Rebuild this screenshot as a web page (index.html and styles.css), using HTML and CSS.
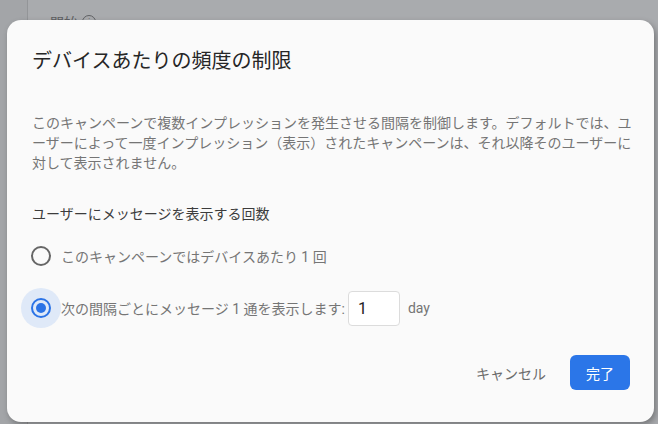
FILE: index.html
```html
<!DOCTYPE html>
<html lang="ja">
<head>
    <meta charset="UTF-8">
    <meta name="viewport" content="width=device-width, initial-scale=1.0">
    <title>デバイスあたりの頻度の制限</title>
    <link rel="stylesheet" href="styles.css">
</head>
<body>
    <div class="page">
        <div class="sidebar"></div>
        <div class="main">
            <div class="field-label">開始 <span class="info">i</span></div>
        </div>
    </div>

    <div class="dialog">
        <h1 class="dialog-title">デバイスあたりの頻度の制限</h1>
        <p class="description">このキャンペーンで複数インプレッションを発生させる間隔を制御します。デフォルトでは、ユーザーによって一度インプレッション（表示）されたキャンペーンは、それ以降そのユーザーに対して表示されません。</p>

        <div class="section-label">ユーザーにメッセージを表示する回数</div>

        <label class="radio-row">
            <span class="radio"><span class="ring"></span></span>
            <span class="radio-text">このキャンペーンではデバイスあたり 1 回</span>
        </label>

        <label class="radio-row">
            <span class="radio checked"><span class="ring"></span></span>
            <span class="radio-text">次の間隔ごとにメッセージ 1 通を表示します:</span>
            <input class="interval" type="text" value="1">
            <span class="unit">day</span>
        </label>

        <div class="actions">
            <button class="btn-cancel">キャンセル</button>
            <button class="btn-done">完了</button>
        </div>
    </div>
</body>
</html>
```

FILE: styles.css
```css
body {
    margin: 0;
    font-family: Roboto, "Noto Sans CJK JP", sans-serif;
    background-color: #a9abae;
    overflow: hidden;
}
.page {
    display: flex;
    height: 424px;
}
.sidebar {
    width: 27px;
    background-color: #a3a5a8;
    border-right: 1px solid #939598;
}
.main {
    flex: 1;
    padding: 12px 0 0 22px;
}
.field-label {
    font-size: 14px;
    color: #5f6063;
    display: flex;
    align-items: center;
    gap: 4px;
}
.info {
    width: 12px;
    height: 12px;
    border: 1.5px solid #5f6063;
    border-radius: 50%;
    font-size: 9px;
    line-height: 12px;
    text-align: center;
}

/* dialog */
.dialog {
    position: absolute;
    left: 7px;
    top: 20px;
    width: 647px;
    height: 402px;
    box-sizing: border-box;
    padding: 27px 24px 0 25px;
    background-color: #fafafa;
    border-radius: 14px;
    box-shadow: 2px 3px 6px rgba(0,0,0,0.3);
}
.dialog-title {
    margin: 0;
    font-size: 20px;
    font-weight: 400;
    line-height: 28px;
    color: #262626;
}
.description {
    margin: 38px -6px 0 0;
    font-size: 14px;
    line-height: 20px;
    color: #757575;
    line-break: loose;
}
.section-label {
    margin-top: 31px;
    font-size: 14px;
    line-height: 20px;
    color: #3c3c3c;
}
.radio-row {
    display: flex;
    align-items: center;
    height: 40px;
    margin: 12px 0 0 -11px;
    font-size: 14px;
    color: #757575;
}
.radio {
    width: 40px;
    height: 40px;
    border-radius: 50%;
    display: flex;
    align-items: center;
    justify-content: center;
    flex-shrink: 0;
}
.ring {
    width: 16px;
    height: 16px;
    border: 2px solid #666666;
    border-radius: 50%;
    display: flex;
    align-items: center;
    justify-content: center;
}
.radio.checked {
    background-color: #dfe9f8;
}
.radio.checked .ring {
    border-color: #2b73e6;
}
.radio.checked .ring::after {
    content: "";
    width: 10px;
    height: 10px;
    border-radius: 50%;
    background-color: #2b73e6;
}
.interval {
    width: 52px;
    height: 35px;
    box-sizing: border-box;
    margin-left: 3px;
    padding: 0 9px;
    border: 1px solid #dcdcdc;
    border-radius: 4px;
    background: white;
    font-family: Roboto, sans-serif;
    font-size: 16px;
    color: #212121;
}
.unit {
    margin-left: 8px;
    color: #757575;
}
.actions {
    display: flex;
    justify-content: flex-end;
    align-items: center;
    gap: 14px;
    margin-top: 27px;
}
.actions button {
    height: 35px;
    border: none;
    border-radius: 6px;
    font-family: Roboto, "Noto Sans CJK JP", sans-serif;
    font-size: 14px;
    cursor: pointer;
}
.btn-cancel {
    background: none;
    color: #6b6b6b;
    padding: 0 10px;
}
.btn-done {
    width: 60px;
    background-color: #2b76e8;
    color: white;
}
```
